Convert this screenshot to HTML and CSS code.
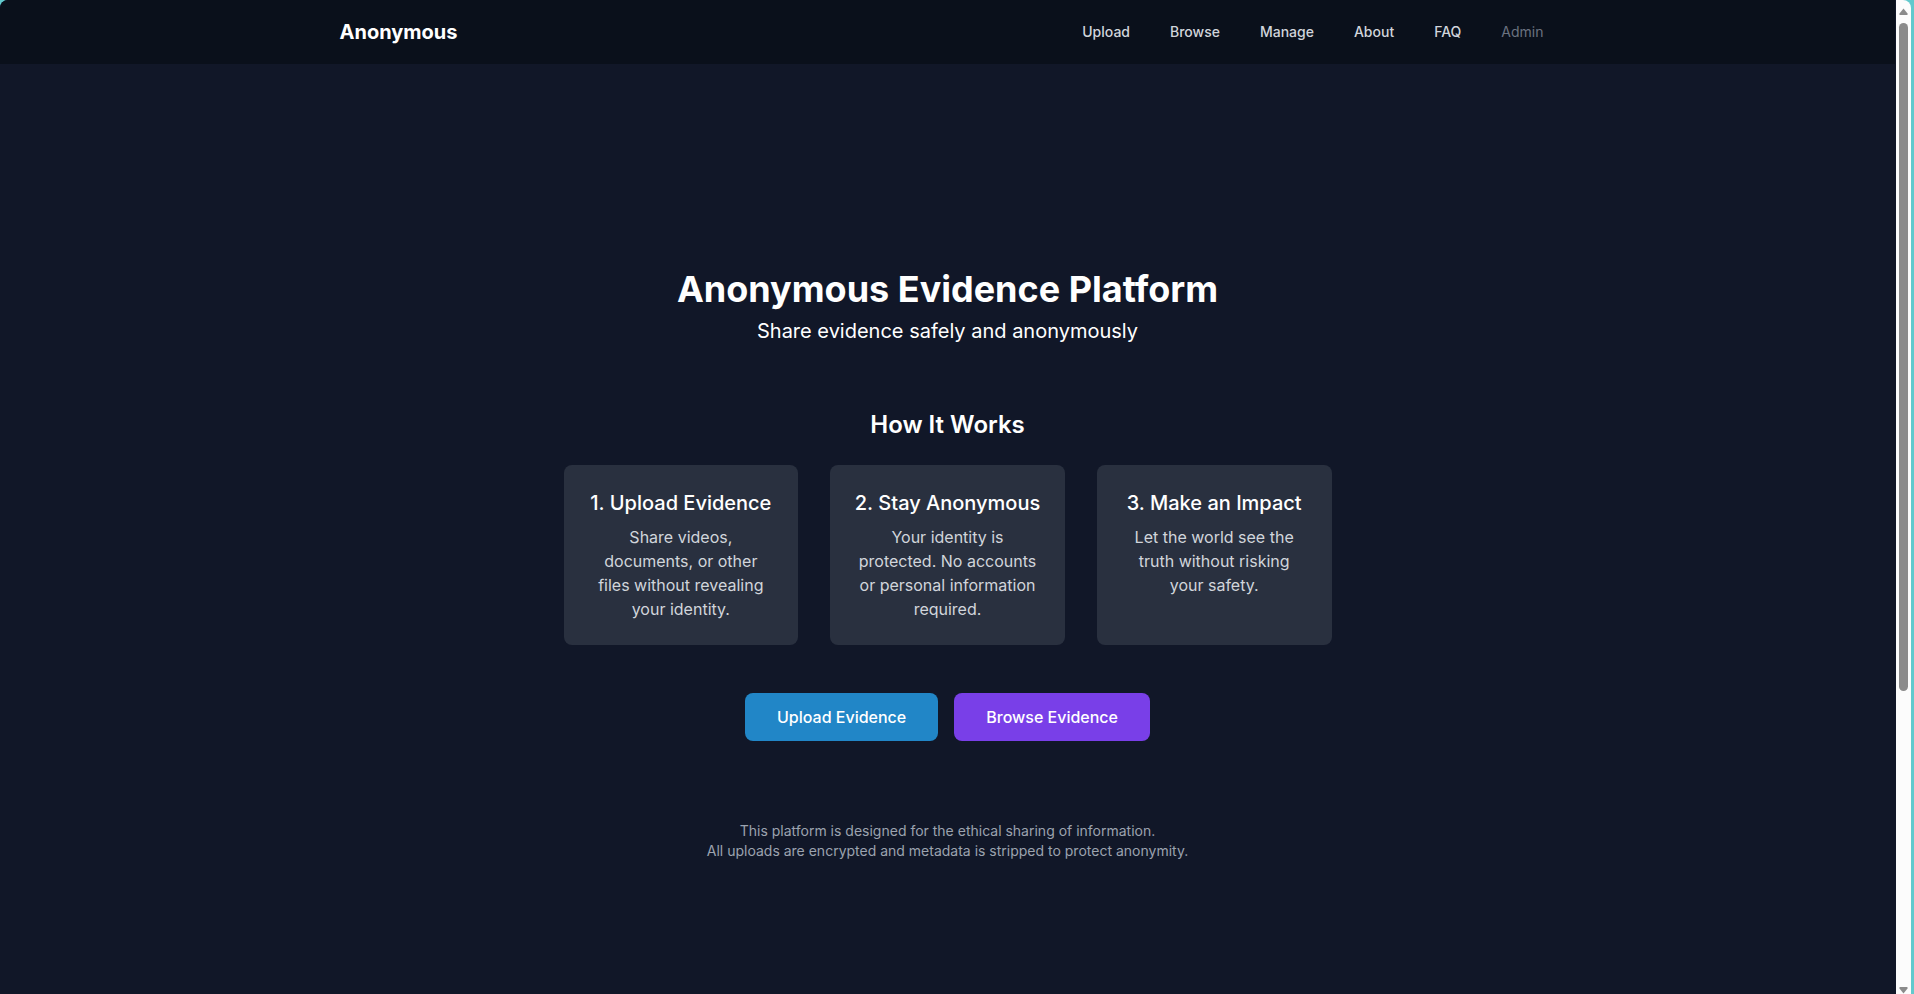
FILE: index.html
```html
<!DOCTYPE html>
<html lang="en">
<head>
<meta charset="utf-8">
<title>Anonymous Evidence Platform</title>
<link rel="stylesheet" href="styles.css">
</head>
<body>
<div class="window">
  <div class="page">
    <header class="header">
      <div class="header-inner">
        <a class="logo" href="#">Anonymous</a>
        <nav class="nav">
          <a class="nav-link" href="#">Upload</a>
          <a class="nav-link" href="#">Browse</a>
          <a class="nav-link" href="#">Manage</a>
          <a class="nav-link" href="#">About</a>
          <a class="nav-link" href="#">FAQ</a>
          <a class="nav-link nav-link-muted" href="#">Admin</a>
        </nav>
      </div>
    </header>
    <main class="main">
      <h1 class="title">Anonymous Evidence Platform</h1>
      <p class="subtitle">Share evidence safely and anonymously</p>
      <section class="steps">
        <h2 class="steps-title">How It Works</h2>
        <div class="cards">
          <article class="card">
            <h3 class="card-title">1. Upload Evidence</h3>
            <p class="card-text">Share videos, documents, or other files without revealing your identity.</p>
          </article>
          <article class="card">
            <h3 class="card-title">2. Stay Anonymous</h3>
            <p class="card-text">Your identity is protected. No accounts or personal information required.</p>
          </article>
          <article class="card">
            <h3 class="card-title">3. Make an Impact</h3>
            <p class="card-text">Let the world see the truth without risking your safety.</p>
          </article>
        </div>
      </section>
      <div class="actions">
        <a class="button button-blue" href="#">Upload Evidence</a>
        <a class="button button-purple" href="#">Browse Evidence</a>
      </div>
      <p class="note">This platform is designed for the ethical sharing of information.<br>All uploads are encrypted and metadata is stripped to protect anonymity.</p>
    </main>
  </div>
  <div class="scrollbar" aria-hidden="true">
    <svg class="scroll-arrow" viewBox="0 0 9 7"><path d="M4.500 0.500L8.500 5.500Q9 7 8 7H1Q0 7 0.500 5.500Z"/></svg>
    <div class="scroll-track"><div class="scroll-thumb"></div></div>
    <svg class="scroll-arrow" viewBox="0 0 9 7"><path d="M4.500 6.500L8.500 1.500Q9 0 8 0H1Q0 0 0.500 1.500Z"/></svg>
  </div>
</div>
</body>
</html>
```
FILE: styles.css
```css
* {
  box-sizing: border-box;
}

body {
  margin: 0;
  background: #62c9cd;
  color: #fff;
  font-family: Inter, "Liberation Sans", sans-serif;
  font-size: 16px;
  line-height: 24px;
}

h1, h2, h3, p {
  margin: 0;
}

a {
  color: inherit;
  text-decoration: none;
}

.window {
  display: flex;
  height: 100vh;
  margin-right: 3px;
  overflow: hidden;
  border-radius: 8px 8px 0 0;
}

.page {
  display: flex;
  flex: 1;
  flex-direction: column;
  border-right: 1px solid #111728;
  background: #111728;
}

.header {
  background: #0a101b;
}

.header-inner {
  display: flex;
  align-items: center;
  justify-content: space-between;
  max-width: 1280px;
  height: 64px;
  margin: 0 auto;
  padding: 0 32px;
}

.logo {
  font-size: 20px;
  font-weight: 700;
  line-height: 28px;
}

.nav {
  display: flex;
  gap: 16px;
}

.nav-link {
  padding: 8px 12px;
  color: #d1d5db;
  font-size: 14px;
  font-weight: 500;
  line-height: 20px;
}

.nav-link-muted {
  color: #6b7280;
  font-weight: 400;
}

.main {
  display: flex;
  flex: 1;
  flex-direction: column;
  align-items: center;
  justify-content: center;
  padding: 72px 16px 0;
  text-align: center;
}

.title {
  margin-bottom: 8px;
  font-size: 36px;
  font-weight: 700;
  line-height: 40px;
}

.subtitle {
  margin-bottom: 64px;
  font-size: 20px;
  line-height: 28px;
}

.steps {
  width: 100%;
  max-width: 768px;
  margin-bottom: 48px;
}

.steps-title {
  margin-bottom: 24px;
  font-size: 24px;
  font-weight: 600;
  line-height: 32px;
}

.cards {
  display: grid;
  grid-template-columns: repeat(3, 1fr);
  gap: 32px;
}

.card {
  padding: 24px;
  border-radius: 8px;
  background: #29303f;
}

.card-title {
  margin: 0 -8px 8px;
  font-size: 20px;
  font-weight: 500;
  line-height: 28px;
}

.card-text {
  color: #d1d5db;
}

.actions {
  display: flex;
  gap: 16px;
  margin-bottom: 80px;
}

.button {
  padding: 12px 32px;
  border-radius: 8px;
  font-weight: 500;
}

.button-blue {
  background: #2186c7;
}

.button-purple {
  background: #793fe8;
}

.note {
  color: #9ca3af;
  font-size: 14px;
  line-height: 20px;
}

.scrollbar {
  display: flex;
  flex-direction: column;
  align-items: center;
  width: 15px;
  padding-top: 8px;
  background: #fcfcfc;
}

.scroll-arrow {
  flex: none;
  width: 9px;
  height: 7px;
  fill: #8b8b8b;
}

.scroll-track {
  flex: 1;
  width: 9px;
  padding-top: 8px;
}

.scroll-thumb {
  height: 668px;
  max-height: 70%;
  border-radius: 5px;
  background: #8b8b8b;
}
```
